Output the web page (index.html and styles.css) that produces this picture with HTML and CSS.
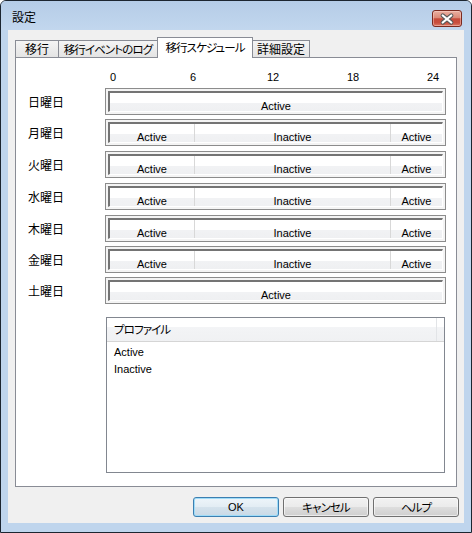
FILE: index.html
```html
<!DOCTYPE html>
<html lang="ja">
<head>
<meta charset="utf-8">
<title>設定</title>
<link rel="stylesheet" href="styles.css">
</head>
<body>
<div class="window">
  <div class="titlebar">
    <span class="title jp">設定</span>
    <div class="close">
      <svg width="28" height="15" viewBox="0 0 28 15">
        <path d="M9.7 4.5 L18.3 11.5 M18.3 4.5 L9.7 11.5" stroke="#5a5a5a" stroke-width="4.2" stroke-linecap="round" fill="none"/>
        <path d="M9.7 4.5 L18.3 11.5 M18.3 4.5 L9.7 11.5" stroke="#ffffff" stroke-width="2.2" stroke-linecap="round" fill="none"/>
      </svg>
    </div>
  </div>
  <div class="client">
    <div class="tabs jp">
      <div class="tab t1">移行</div>
      <div class="tab t2 kana">移行イベントのログ</div>
      <div class="tab t3 active kana">移行スケジュール</div>
      <div class="tab t4">詳細設定</div>
    </div>
    <div class="panel">
      <div class="scale">
        <span>0</span><span>6</span><span>12</span><span>18</span><span>24</span>
      </div>
      <div class="days">
        <div class="row"><span class="day jp">日曜日</span>
          <div class="bar"><div class="bar-inner"><div class="seg full">Active</div></div></div></div>
        <div class="row"><span class="day jp">月曜日</span>
          <div class="bar"><div class="bar-inner"><div class="seg w1">Active</div><div class="seg w2">Inactive</div><div class="seg w3">Active</div></div></div></div>
        <div class="row wide"><span class="day jp">火曜日</span>
          <div class="bar"><div class="bar-inner"><div class="seg w1">Active</div><div class="seg w2">Inactive</div><div class="seg w3">Active</div></div></div></div>
        <div class="row wide"><span class="day jp">水曜日</span>
          <div class="bar"><div class="bar-inner"><div class="seg w1">Active</div><div class="seg w2">Inactive</div><div class="seg w3">Active</div></div></div></div>
        <div class="row wide"><span class="day jp">木曜日</span>
          <div class="bar"><div class="bar-inner"><div class="seg w1">Active</div><div class="seg w2">Inactive</div><div class="seg w3">Active</div></div></div></div>
        <div class="row"><span class="day jp">金曜日</span>
          <div class="bar"><div class="bar-inner"><div class="seg w1">Active</div><div class="seg w2">Inactive</div><div class="seg w3">Active</div></div></div></div>
        <div class="row"><span class="day jp">土曜日</span>
          <div class="bar"><div class="bar-inner"><div class="seg full">Active</div></div></div></div>
      </div>
      <div class="profiles">
        <div class="list-head"><div class="col jp kana">プロファイル</div><div class="col-rest"></div></div>
        <div class="list-body">
          <div class="item">Active</div>
          <div class="item">Inactive</div>
        </div>
      </div>
    </div>
    <div class="buttons">
      <div class="btn default">OK</div>
      <div class="btn jp kana">キャンセル</div>
      <div class="btn jp kana">ヘルプ</div>
    </div>
  </div>
</div>
</body>
</html>
```
FILE: styles.css
```css
* { box-sizing: border-box; }
html, body { margin: 0; padding: 0; }
body {
  width: 472px;
  height: 533px;
  overflow: hidden;
  font-family: "Liberation Sans", "Noto Sans CJK JP", sans-serif;
  font-size: 11px;
  color: #000;
  background: #fff;
}
.jp {
  font-family: "Noto Sans CJK JP", "Liberation Sans", sans-serif;
  font-size: 12px;
  font-feature-settings: "palt" 1;
}
.kana {
  font-size: 11.5px;
  letter-spacing: -0.9px;
}
.window {
  width: 472px;
  height: 533px;
  border: 1px solid #1c2530;
  border-radius: 6px 6px 0 0;
  background: #bfd5ed;
  display: flex;
  flex-direction: column;
  overflow: hidden;
}
.titlebar {
  height: 29px;
  flex: none;
  display: flex;
  align-items: flex-start;
  padding-left: 11px;
  background: linear-gradient(#b5cce7, #c2d7ee);
}
.title {
  line-height: 29px;
  padding-top: 1px;
}
.close {
  margin: 9px 9px 0 auto;
  width: 30px;
  height: 17px;
  border: 1px solid #7a2a20;
  border-radius: 3px;
  background: linear-gradient(#eab0a2 0%, #dc8a78 45%, #c64b3a 52%, #c94f3e 78%, #dc7a66 100%);
  box-shadow: inset 0 0 0 1px rgba(255, 220, 210, 0.45);
  display: flex;
}
.close svg { display: block; }
.client {
  margin: 0 7px;
  height: 493px;
  flex: none;
  background: #f0f0f0;
  display: flex;
  flex-direction: column;
  padding-top: 7px;
}
.tabs {
  display: flex;
  align-items: flex-end;
  margin-left: 7px;
  height: 21px;
  margin-bottom: -1px;
  position: relative;
  z-index: 1;
}
.tab {
  height: 17px;
  margin-bottom: 1px;
  margin-left: -1px;
  border: 1px solid #898c95;
  border-bottom: none;
  background: linear-gradient(#f4f4f4, #e4e4e4);
  text-align: center;
  line-height: 16px;
  white-space: nowrap;
  overflow: hidden;
}
.tab.t1 { width: 44px; margin-left: 0; }
.tab.t2 { width: 100px; }
.tab.t3 { width: 96px; }
.tab.t4 { width: 58px; }
.tab.active {
  height: 21px;
  margin-bottom: 0;
  background: #fff;
  line-height: 18px;
  position: relative;
  z-index: 2;
}
.panel {
  margin-left: 7px;
  width: 442px;
  height: 430px;
  flex: none;
  border: 1px solid #898c95;
  background: #fff;
  padding-top: 12px;
}
.scale {
  display: flex;
  gap: 60px;
  margin-left: 87px;
  height: 14px;
}
.scale span {
  width: 20px;
  text-align: center;
  line-height: 14px;
}
.days {
  display: flex;
  flex-direction: column;
  gap: 4px;
  margin-top: 4px;
}
.row {
  display: flex;
  align-items: center;
  height: 27px;
  padding-left: 12px;
}
.row.wide { margin-top: 1px; }
.day {
  width: 77px;
  flex: none;
}
.bar {
  width: 341px;
  height: 27px;
  border: 1px solid #8c8c8c;
  padding: 2px;
  background: #f4f4f4;
}
.bar-inner {
  height: 21px;
  border-top: 2px solid #747474;
  border-left: 2px solid #747474;
  border-right: 1px solid #ffffff;
  border-bottom: 1px solid #ffffff;
  display: flex;
  overflow: hidden;
  background: linear-gradient(#ffffff 0%, #ffffff 58%, #f1f2f4 58%, #eff0f2 100%);
}
.seg {
  height: 100%;
  padding-top: 7px;
  line-height: 13px;
  text-align: center;
  flex: none;
  white-space: nowrap;
}
.seg.w1 { width: 85px; border-right: 1px solid #d8d8d8; }
.seg.w2 { width: 196px; border-right: 1px solid #d8d8d8; }
.seg.w3 { flex: 1; }
.seg.full { flex: 1; }
.profiles {
  margin-left: 90px;
  margin-top: 13px;
  width: 339px;
  height: 156px;
  border: 1px solid #828790;
  background: #fff;
}
.list-head {
  display: flex;
  height: 24px;
  border-bottom: 1px solid #d5d5d5;
  background: linear-gradient(#ffffff 0%, #ffffff 39%, #f3f4f6 39%, #f0f1f3 100%);
}
.col {
  width: 330px;
  padding-left: 7px;
  line-height: 23px;
  border-right: 1px solid #e2e4e7;
}
.col-rest { flex: 1; }
.list-body { padding-top: 2px; }
.item {
  padding-left: 7px;
  line-height: 17px;
}
.buttons {
  display: flex;
  justify-content: flex-end;
  gap: 4px;
  margin-top: 10px;
  margin-right: 5px;
}
.btn {
  width: 86px;
  height: 20px;
  border: 1px solid #707070;
  border-radius: 3px;
  background: linear-gradient(#f2f2f2 0%, #ebebeb 48%, #dddddd 52%, #cfcfcf 100%);
  box-shadow: inset 0 0 0 1px rgba(255, 255, 255, 0.6);
  text-align: center;
  line-height: 18px;
}
.btn.default {
  border-color: #3c7fb1;
  background: linear-gradient(#eef5fa 0%, #e3edf4 48%, #d4e2ec 52%, #c9d9e6 100%);
  box-shadow: inset 0 0 0 1px #9fdcf8;
}
```
